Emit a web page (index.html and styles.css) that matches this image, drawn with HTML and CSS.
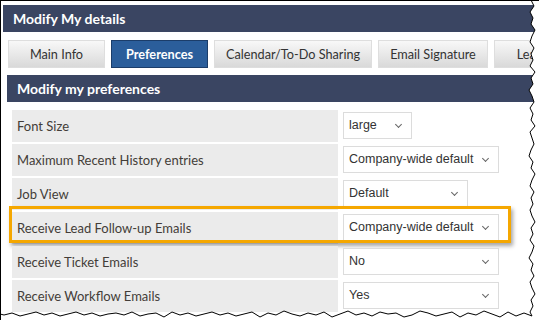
FILE: index.html
```html
<!DOCTYPE html>
<html lang="en">
<head>
    <meta charset="UTF-8">
    <title>Modify My details</title>
    <link rel="stylesheet" href="styles.css">
</head>
<body>
    <div class="shot">
        <div class="panel-title">Modify My details</div>

        <div class="tabs">
            <div class="tab">Main Info</div>
            <div class="tab active">Preferences</div>
            <div class="tab">Calendar/To-Do Sharing</div>
            <div class="tab">Email Signature</div>
            <div class="tab last">Leads</div>
        </div>

        <div class="content">
            <div class="section-title">Modify my preferences</div>

            <div class="prefs">
                <div class="row">
                    <div class="label">Font Size</div>
                    <div class="value"><div class="select small">large<span class="chev"></span></div></div>
                </div>
                <div class="row">
                    <div class="label">Maximum Recent History entries</div>
                    <div class="value"><div class="select">Company-wide default<span class="chev"></span></div></div>
                </div>
                <div class="row">
                    <div class="label">Job View</div>
                    <div class="value"><div class="select medium">Default<span class="chev"></span></div></div>
                </div>
                <div class="row highlight">
                    <div class="label">Receive Lead Follow-up Emails</div>
                    <div class="value"><div class="select">Company-wide default<span class="chev"></span></div></div>
                </div>
                <div class="row">
                    <div class="label">Receive Ticket Emails</div>
                    <div class="value"><div class="select">No<span class="chev"></span></div></div>
                </div>
                <div class="row">
                    <div class="label">Receive Workflow Emails</div>
                    <div class="value"><div class="select">Yes<span class="chev"></span></div></div>
                </div>
            </div>
        </div>

        <!-- torn paper edge of the screenshot -->
        <svg class="tear" width="539" height="320" viewBox="0 0 539 320">
            <path class="tear-fill" d="M541,-2 L531,-2 L531,0 L534,6 L530,12 L533,18 L531,24 L535,30 L532,36 L530,42 L534,48 L531,54 L533,60 L530,66 L535,72 L531,78 L533,84 L529,90 L532,96 L534,102 L530,108 L533,114 L531,120 L535,126 L530,132 L532,138 L534,144 L531,150 L529,156 L533,162 L531,168 L535,174 L532,180 L530,186 L534,192 L531,198 L533,204 L530,210 L532,216 L535,222 L531,228 L533,234 L530,240 L534,246 L532,252 L529,258 L533,264 L531,270 L534,276 L530,282 L532,288 L535,294 L531,300 L533,306 L530,312 L532,316 L524,313 L516,316 L508,312 L500,317 L492,314 L484,311 L476,315 L468,313 L460,317 L452,312 L444,314 L436,316 L428,313 L420,311 L412,315 L404,317 L396,313 L388,314 L380,312 L372,316 L364,313 L356,315 L348,311 L340,314 L332,317 L324,312 L316,315 L308,313 L300,316 L292,314 L284,311 L276,315 L268,313 L260,317 L252,312 L244,314 L236,316 L228,313 L220,315 L212,312 L204,314 L196,316 L188,313 L180,315 L172,312 L164,317 L156,313 L148,314 L140,316 L132,312 L124,315 L116,313 L108,314 L100,316 L92,313 L84,315 L76,312 L68,314 L60,316 L52,313 L44,315 L36,312 L28,314 L20,316 L12,313 L4,315 L0,314 L-2,314 L-2,322 L541,322 Z"/>
        </svg>
    </div>
</body>
</html>
```

FILE: styles.css
```css
body {
    margin: 0;
    padding: 0;
    background-color: white;
    font-family: 'Lato', 'Open Sans', sans-serif;
}
.shot {
    position: relative;
    width: 538px;
    height: 319px;
    border-top: 1px solid black;
    border-left: 1px solid black;
    overflow: hidden;
    background-color: white;
}
.panel-title {
    margin: 4px 0 0 2px;
    width: 640px;
    height: 27px;
    line-height: 27px;
    padding-left: 10px;
    background-color: #3a4562;
    color: white;
    font-weight: bold;
    font-size: 14px;
}
.tabs {
    display: flex;
    gap: 6px;
    margin: 8px 0 0 7px;
    white-space: nowrap;
}
.tab {
    flex-shrink: 0;
    box-sizing: border-box;
    min-width: 97px;
    height: 28px;
    line-height: 26px;
    padding: 0 11px;
    text-align: center;
    font-size: 12.7px;
    color: #333;
    border: 1px solid #dedede;
    background: linear-gradient(#f8f8f8, #d9d9d9);
}
.tab.active {
    background: #2b5e9b;
    border-color: #1b3d6a;
    color: white;
    font-weight: bold;
}
.tab.last {
    text-align: left;
    padding-left: 22px;
}
.content {
    margin: 7px 0 0 6px;
}
.section-title {
    height: 27px;
    line-height: 27px;
    padding-left: 10px;
    width: 640px;
    background-color: #3a4562;
    color: white;
    font-weight: bold;
    font-size: 14px;
}
.prefs {
    display: flex;
    flex-direction: column;
    gap: 2px;
    margin: 8px 0 0 5px;
}
.row {
    position: relative;
    display: grid;
    grid-template-columns: 326px 200px;
    height: 32px;
}
.label {
    background-color: #ebebeb;
    color: #433d38;
    font-size: 13px;
    line-height: 32px;
    padding-left: 5px;
}
.value {
    padding: 2px 0 0 5px;
}
.select {
    position: relative;
    box-sizing: border-box;
    width: 156px;
    height: 27px;
    line-height: 25px;
    padding-left: 5px;
    border: 1px solid #dcdcdc;
    background-color: white;
    color: #333;
    font-family: 'Liberation Sans', Arial, sans-serif;
    font-size: 12.5px;
}
.select.small {
    width: 69px;
}
.select.medium {
    width: 125px;
}
.chev {
    position: absolute;
    right: 10px;
    top: 9px;
    width: 4px;
    height: 4px;
    border-right: 1px solid #666;
    border-bottom: 1px solid #666;
    transform: rotate(45deg);
}
.row.highlight::after {
    content: "";
    position: absolute;
    left: -3px;
    top: -6px;
    width: 496px;
    height: 31px;
    border: 3px solid #f5a700;
    box-shadow: 2px 3px 4px rgba(0, 0, 0, 0.35);
}
.tear {
    position: absolute;
    left: -1px;
    top: -1px;
}
.tear-fill {
    fill: white;
    stroke: black;
    stroke-width: 1;
}
```
